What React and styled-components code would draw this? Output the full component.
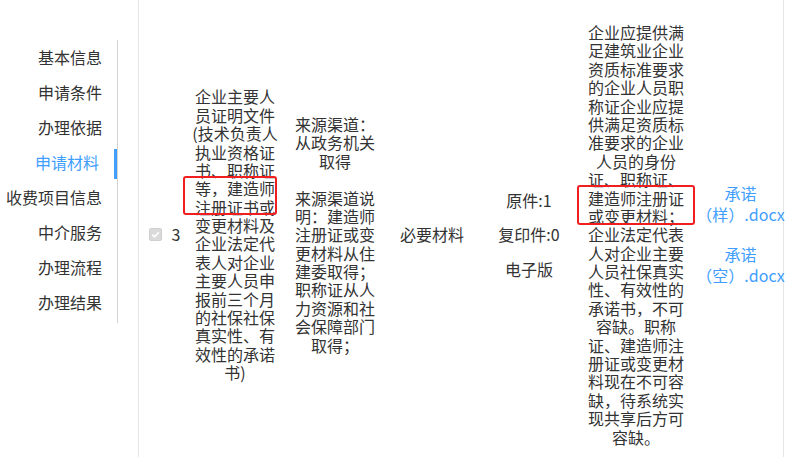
import React from "react";
import styled, { createGlobalStyle, css } from "styled-components";

const GlobalStyle = createGlobalStyle`
  html, body { margin: 0; padding: 0; background: #fff; }
  body {
    font-family: "Microsoft YaHei", "Noto Sans CJK SC", "Noto Sans", sans-serif;
    color: #333;
  }
`;

const Page = styled.div`
  display: flex;
  align-items: flex-start;
  height: 457px;
  overflow: hidden;
`;

const Nav = styled.ul`
  list-style: none;
  margin: 40px 20px 0 0;
  padding: 0 0 3px;
  width: 117px;
  flex: none;
  border-right: 1px solid #d2d2d2;
`;

const NavItem = styled.li`
  position: relative;
  height: 35px;
  line-height: 35px;
  text-align: right;
  padding-right: 15px;
  font-size: 16px;
  color: #333;
  white-space: nowrap;
  ${(p) =>
    p.$active &&
    css`
      color: #409eff;
      padding-right: 18px;
      &::after {
        content: "";
        position: absolute;
        right: 0;
        top: 4px;
        width: 3px;
        height: 30px;
        background: #409eff;
      }
    `}
`;

const Table = styled.div`
  flex: none;
  width: 644px;
  height: 457px;
  border-left: 1px solid #e6e6e6;
  border-right: 1px solid #e6e6e6;
`;

const Row = styled.div`
  display: grid;
  grid-template-columns: 27px 20px 98px 102px 92px 102px 112px 91px;
  align-items: center;
  padding-top: 23px;
  font-size: 16px;
  line-height: 1.15;
`;

const Cell = styled.div`
  display: flex;
  justify-content: ${(p) => (p.$start ? "flex-start" : "center")};
  padding-left: ${(p) => p.$pl || 0}px;
  text-align: center;
`;

const Text = styled.div`
  position: relative;
  width: ${(p) => p.$w}px;
  text-align: center;
`;

const Mark = styled.span`
  position: absolute;
  left: ${(p) => p.$left}px;
  right: ${(p) => p.$right}px;
  top: calc(${(p) => p.$line} * 1.15em + ${(p) => p.$dy}px);
  height: ${(p) => p.$h}px;
  border: 2px solid #f01e1e;
  border-radius: 3px;
  box-sizing: border-box;
  pointer-events: none;
`;

const Check = styled.span`
  display: inline-flex;
  align-items: center;
  justify-content: center;
  width: 13px;
  height: 13px;
  box-sizing: border-box;
  background: #dadada;
  border: 1px solid #d0d0d0;
  border-radius: 2px;
`;

const Stack = styled.div`
  display: flex;
  flex-direction: column;
  align-items: center;
  gap: ${(p) => p.$gap}px;
  line-height: ${(p) => p.$lh || "1.15"};
`;

const Link = styled.a`
  display: block;
  color: #409eff;
  text-decoration: none;
  text-align: center;
  cursor: pointer;
`;

const navItems = [
  "基本信息",
  "申请条件",
  "办理依据",
  "申请材料",
  "收费项目信息",
  "中介服务",
  "办理流程",
  "办理结果",
];

export default function App() {
  return (
    <>
      <GlobalStyle />
      <Page>
        <Nav>
          {navItems.map((t) => (
            <NavItem key={t} $active={t === "申请材料"}>
              {t}
            </NavItem>
          ))}
        </Nav>
        <Table>
          <Row>
            <Cell $start $pl={10}>
              <Check>
                <svg width="9" height="9" viewBox="0 0 9 9">
                  <path
                    d="M1.3 4.6 L3.6 6.8 L7.8 2.2"
                    fill="none"
                    stroke="#fff"
                    strokeWidth="1.7"
                  />
                </svg>
              </Check>
            </Cell>
            <Cell>3</Cell>
            <Cell>
              <Text $w={88}>
                企业主要人员证明文件(技术负责人执业资格证书、职称证等，建造师注册证书或变更材料及企业法定代表人对企业主要人员申报前三个月的社保社保真实性、有效性的承诺书)
                <Mark $left={-8} $right={2} $line={5} $dy={-3} $h={39} />
              </Text>
            </Cell>
            <Cell>
              <Text $w={88}>
                来源渠道：从政务机关取得
                <br />
                <br />
                来源渠道说明：建造师注册证或变更材料从住建委取得；职称证从人力资源和社会保障部门取得；
              </Text>
            </Cell>
            <Cell>必要材料</Cell>
            <Cell>
              <Stack $gap={16}>
                <span>原件:1</span>
                <span>复印件:0</span>
                <span>电子版</span>
              </Stack>
            </Cell>
            <Cell>
              <Text $w={100}>
                企业应提供满足建筑业企业资质标准要求的企业人员职称证企业应提供满足资质标准要求的企业人员的身份证、职称证、建造师注册证或变更材料；企业法定代表人对企业主要人员社保真实性、有效性的承诺书，不可容缺。职称证、建造师注册证或变更材料现在不可容缺，待系统实现共享后方可容缺。
                <Mark $left={-9} $right={-9} $line={9} $dy={-4} $h={40} />
              </Text>
            </Cell>
            <Cell $pl={6}>
              <Stack $gap={20} $lh="20.5px">
                <Link>承诺（样）.docx</Link>
                <Link>承诺（空）.docx</Link>
              </Stack>
            </Cell>
          </Row>
        </Table>
      </Page>
    </>
  );
}
